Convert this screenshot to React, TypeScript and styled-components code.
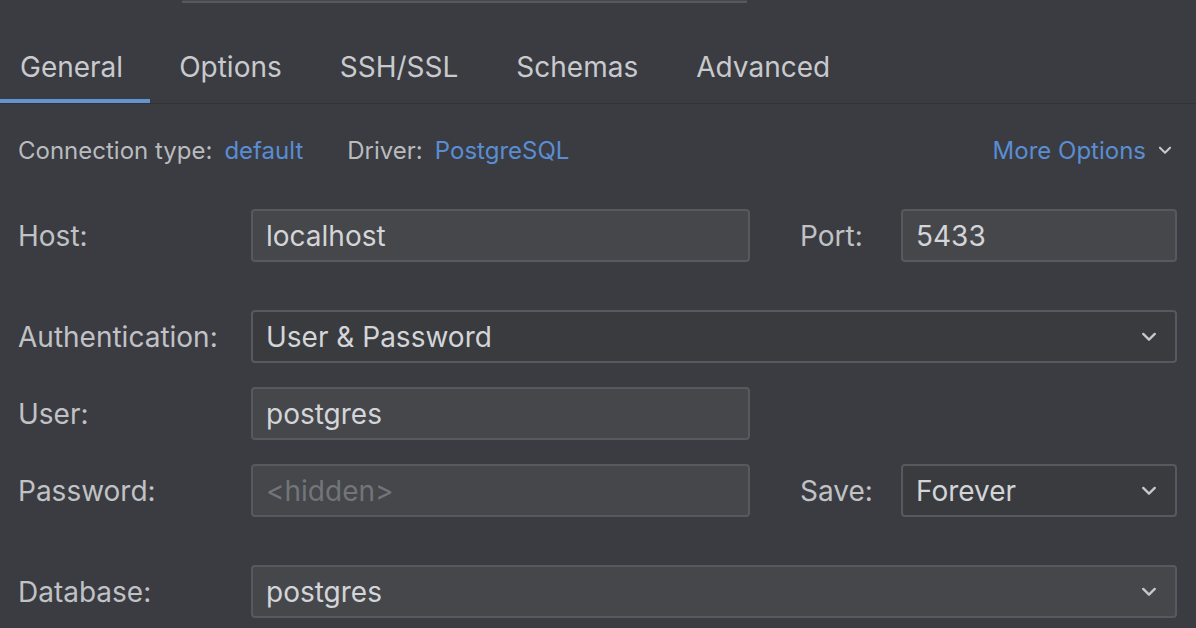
import React from "react";
import styled, { createGlobalStyle } from "styled-components";

const GlobalStyle = createGlobalStyle`
  html, body {
    margin: 0;
    padding: 0;
    background-color: #3a3c41;
  }
  body {
    font-family: Inter, "Noto Sans", "Liberation Sans", sans-serif;
    -webkit-font-smoothing: antialiased;
  }
`;

const Page = styled.div`
  width: 1196px;
  height: 628px;
  overflow: hidden;
  background-color: #3a3c41;
  color: #c3c5c8;
`;

const CutField = styled.div`
  margin-left: 182px;
  width: 565px;
  height: 3px;
  background-color: #46484c;
  border-bottom: 2px solid #55585c;
  box-sizing: border-box;
`;

const TabBar = styled.nav`
  display: flex;
  margin-top: 34px;
  border-bottom: 1px solid #313337;
`;

const Tab = styled.div<{ $active?: boolean }>`
  box-sizing: border-box;
  height: 66px;
  padding: 0 29px;
  line-height: 60px;
  font-size: 28px;
  color: #c8cacd;
  border-bottom: 4px solid ${(p) => (p.$active ? "#6194d0" : "transparent")};

  &:first-child {
    padding-left: 20px;
    padding-right: 27px;
  }
`;

const InfoRow = styled.div`
  display: flex;
  align-items: center;
  height: 40px;
  margin-top: 26px;
  padding: 0 24px 0 18px;
  font-size: 24px;
`;

const InfoLabel = styled.span<{ $gap?: number }>`
  color: #b9bbbe;
  margin-left: ${(p) => p.$gap ?? 0}px;
`;

const InfoLink = styled.span`
  color: #5a8dd3;
  margin-left: 12px;
`;

const MoreOptions = styled.span`
  display: flex;
  align-items: center;
  gap: 12px;
  margin-left: auto;
  color: #5a8dd3;
`;

const FormRow = styled.div<{ $spaced?: boolean }>`
  display: grid;
  grid-template-columns: 233px 499px 50px 101px 276px;
  align-items: center;
  padding-left: 18px;
  height: 53px;
  margin-top: ${(p) => (p.$spaced ? 48 : 24)}px;

  &:first-of-type {
    margin-top: 39px;
  }
`;

const Label = styled.label<{ $col?: number }>`
  font-size: 28px;
  color: #c0c2c5;
  grid-column: ${(p) => p.$col ?? 1};
  white-space: nowrap;
`;

const Field = styled.div<{ $combo?: boolean; $wide?: boolean; $col?: number }>`
  grid-column: ${(p) => (p.$wide ? "2 / 6" : p.$col ?? 2)};
  box-sizing: border-box;
  height: 53px;
  display: flex;
  align-items: center;
  padding: 0 18px 0 13px;
  border: 2px solid #56595d;
  border-radius: 4px;
  background-color: ${(p) => (p.$combo ? "#393b3f" : "#45474b")};
  font-size: 28px;
  color: #d3d5d8;
  white-space: nowrap;
`;

const Placeholder = styled.span`
  color: #72757a;
`;

const Value = styled.span`
  flex: 1;
`;

function Chevron({ size = 16 }: { size?: number }) {
  return (
    <svg width={size} height={size * 0.6} viewBox="0 0 16 10" fill="none">
      <path
        d="M2 2l6 6 6-6"
        stroke="#c6c8cb"
        strokeWidth="2.4"
        strokeLinecap="round"
        strokeLinejoin="round"
      />
    </svg>
  );
}

const FormSection = styled.section``;

export default function App() {
  return (
    <Page>
      <GlobalStyle />
      <CutField />
      <TabBar>
        <Tab $active>General</Tab>
        <Tab>Options</Tab>
        <Tab>SSH/SSL</Tab>
        <Tab>Schemas</Tab>
        <Tab>Advanced</Tab>
      </TabBar>
      <InfoRow>
        <InfoLabel>Connection type:</InfoLabel>
        <InfoLink>default</InfoLink>
        <InfoLabel $gap={44}>Driver:</InfoLabel>
        <InfoLink>PostgreSQL</InfoLink>
        <MoreOptions>
          More Options <Chevron size={14} />
        </MoreOptions>
      </InfoRow>
      <FormSection>
        <FormRow>
          <Label>Host:</Label>
          <Field>localhost</Field>
          <Label $col={4}>Port:</Label>
          <Field $col={5}>5433</Field>
        </FormRow>
        <FormRow $spaced>
          <Label>Authentication:</Label>
          <Field $combo $wide>
            <Value>User &amp; Password</Value>
            <Chevron />
          </Field>
        </FormRow>
        <FormRow>
          <Label>User:</Label>
          <Field>postgres</Field>
        </FormRow>
        <FormRow>
          <Label>Password:</Label>
          <Field>
            <Placeholder>&lt;hidden&gt;</Placeholder>
          </Field>
          <Label $col={4}>Save:</Label>
          <Field $combo $col={5}>
            <Value>Forever</Value>
            <Chevron />
          </Field>
        </FormRow>
        <FormRow $spaced>
          <Label>Database:</Label>
          <Field $wide>
            <Value>postgres</Value>
            <Chevron />
          </Field>
        </FormRow>
      </FormSection>
    </Page>
  );
}
